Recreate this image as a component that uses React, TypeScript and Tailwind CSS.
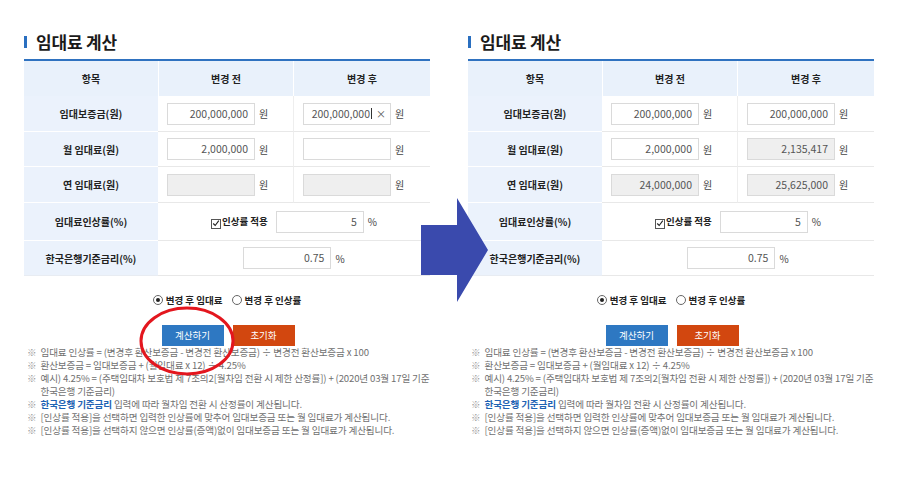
import React from "react"

const FONT = { fontFamily: '"Noto Sans CJK KR", "Noto Sans", sans-serif' }

interface Row {
  label: string
  before: { value: string; disabled?: boolean; cursor?: boolean }
  after: { value: string; disabled?: boolean; cursor?: boolean }
}

const LEFT_ROWS: Row[] = [
  { label: "임대보증금(원)", before: { value: "200,000,000" }, after: { value: "200,000,000", cursor: true } },
  { label: "월 임대료(원)", before: { value: "2,000,000" }, after: { value: "" } },
  { label: "연 임대료(원)", before: { value: "", disabled: true }, after: { value: "", disabled: true } },
]

const RIGHT_ROWS: Row[] = [
  { label: "임대보증금(원)", before: { value: "200,000,000" }, after: { value: "200,000,000" } },
  { label: "월 임대료(원)", before: { value: "2,000,000" }, after: { value: "2,135,417", disabled: true } },
  { label: "연 임대료(원)", before: { value: "24,000,000", disabled: true }, after: { value: "25,625,000", disabled: true } },
]

const NOTES = [
  "임대료 인상률 = (변경후 환산보증금 - 변경전 환산보증금) ÷ 변경전 환산보증금 x 100",
  "환산보증금 = 임대보증금 + (월임대료 x 12) ÷ 4.25%",
]

function Field({ value, disabled, cursor }: { value: string; disabled?: boolean; cursor?: boolean }) {
  return (
    <div
      className={
        "w-[88px] h-[22px] border border-[#dadada] flex items-center justify-end pr-[6px] text-[10.5px] text-[#555] " +
        (disabled ? "bg-[#efefef]" : "bg-white")
      }
    >
      {cursor ? (
        <>
          <span>{value}</span>
          <span className="w-px h-[11px] bg-[#333] ml-px" />
          <span className="ml-[4px] text-[10px] text-[#555] -mr-[2px]">×</span>
        </>
      ) : (
        value
      )}
    </div>
  )
}

function Panel({ rows }: { rows: Row[] }) {
  const labelCell = "bg-[#ebf2fc] border-b border-white flex items-center justify-center text-[10px] font-bold text-[#222]"
  const dataCell = "bg-white border-b border-[#e8e8e8] flex items-center pl-[9px] gap-[4px] text-[10px] text-[#444]"

  return (
    <div className="w-[406px] flex flex-col">
      {/* Title */}
      <div className="h-[22px] flex items-center gap-[9px]">
        <span className="w-[3px] h-[12px] bg-[#2a6fc0]" />
        <span className="text-[17px] font-bold text-[#1a1a1a] tracking-[-0.2px]">임대료 계산</span>
      </div>

      {/* Table */}
      <div className="mt-[6px] border-t-2 border-[#2f72c0] grid grid-cols-[134px_135px_137px]">
        <div className="h-[35px] bg-[#e9f1fb] flex items-center justify-center text-[10px] font-bold text-[#222]">항목</div>
        <div className="h-[35px] bg-[#e9f1fb] border-l border-white flex items-center justify-center text-[10px] font-bold text-[#222]">
          변경 전
        </div>
        <div className="h-[35px] bg-[#e9f1fb] border-l border-white flex items-center justify-center text-[10px] font-bold text-[#222]">
          변경 후
        </div>

        {rows.map((row, i) => (
          <React.Fragment key={i}>
            <div className={labelCell + (i === 1 ? " h-[35px]" : " h-[36px]")}>{row.label}</div>
            <div className={dataCell}>
              <Field {...row.before} />
              <span>원</span>
            </div>
            <div className={dataCell + " border-l border-l-[#eeeeee]"}>
              <Field {...row.after} />
              <span>원</span>
            </div>
          </React.Fragment>
        ))}

        {/* Rent increase rate */}
        <div className={labelCell + " h-[38px]"}>임대료인상률(%)</div>
        <div className="col-span-2 bg-white border-b border-[#e8e8e8] flex items-center justify-center gap-[4px] text-[10px] text-[#444]">
          <span className="flex items-end gap-[1px] mr-[4px]">
            <span className="w-[10px] h-[10px] border border-[#555] bg-white flex items-center justify-center mt-[3px]">
              <svg viewBox="0 0 10 10" className="w-[9px] h-[9px]">
                <path d="M1.5 5 L4 7.5 L8.5 1.5" fill="none" stroke="#222" strokeWidth="1.4" />
              </svg>
            </span>
            <span className="text-[9.5px] font-bold text-[#222]">인상률 적용</span>
          </span>
          <Field value="5" />
          <span>%</span>
        </div>

        {/* Bank of Korea base rate */}
        <div className={labelCell + " h-[35px] border-b-[#e8ecf2]"}>한국은행기준금리(%)</div>
        <div className="col-span-2 bg-white border-b border-[#e8e8e8] flex items-center justify-center gap-[4px] text-[10px] text-[#444]">
          <Field value="0.75" />
          <span>%</span>
        </div>
      </div>

      {/* Radio options */}
      <div className="mt-[16px] h-[16px] flex items-center justify-center gap-[3px] text-[9.5px] font-bold text-[#222]">
        <span className="w-[10px] h-[10px] rounded-full border border-[#666] flex items-center justify-center">
          <span className="w-[4px] h-[4px] rounded-full bg-[#222]" />
        </span>
        <span>변경 후 임대료</span>
        <span className="ml-[6px] w-[10px] h-[10px] rounded-full border border-[#666]" />
        <span>변경 후 인상률</span>
      </div>

      {/* Buttons */}
      <div className="mt-[17px] flex justify-center gap-[9px] pl-[2px]">
        <button className="w-[62px] h-[21px] bg-[#2e78c2] text-white text-[9.5px]">계산하기</button>
        <button className="w-[62px] h-[21px] bg-[#d2470f] text-white text-[9.5px]">초기화</button>
      </div>

      {/* Notes */}
      <ul className="pl-[3px] flex flex-col text-[9.6px] leading-[13px] text-[#707070] tracking-[-0.15px]">
        {NOTES.map((n, i) => (
          <li key={i} className="flex gap-[4px] whitespace-nowrap">
            <span className="text-[#999]">※</span>
            <span>{n}</span>
          </li>
        ))}
        <li className="flex gap-[4px] whitespace-nowrap">
          <span className="text-[#999]">※</span>
          <span>
            예시) 4.25% = (주택임대차 보호법 제 7조의2[월차임 전환 시 제한 산정률]) + (2020년 03월 17일 기준
            <br />
            한국은행 기준금리)
          </span>
        </li>
        <li className="flex gap-[4px] whitespace-nowrap">
          <span className="text-[#999]">※</span>
          <span>
            <b className="text-[#1e63b4]">한국은행 기준금리</b> 입력에 따라 월차임 전환 시 산정률이 계산됩니다.
          </span>
        </li>
        <li className="flex gap-[4px] whitespace-nowrap">
          <span className="text-[#999]">※</span>
          <span>[인상률 적용]을 선택하면 입력한 인상률에 맞추어 임대보증금 또는 월 임대료가 계산됩니다.</span>
        </li>
        <li className="flex gap-[4px] whitespace-nowrap">
          <span className="text-[#999]">※</span>
          <span>[인상률 적용]을 선택하지 않으면 인상률(증액)없이 임대보증금 또는 월 임대료가 계산됩니다.</span>
        </li>
      </ul>
    </div>
  )
}

export default function App() {
  return (
    <div className="relative w-[900px] h-[482px] bg-white overflow-hidden" style={FONT}>
      <div className="flex gap-[38px] pl-[24px] pt-[31px]">
        <Panel rows={LEFT_ROWS} />
        <Panel rows={RIGHT_ROWS} />
      </div>

      {/* Highlight around the calculate button */}
      <svg className="absolute left-[138px] top-[305px]" width="98" height="72" viewBox="0 0 98 72">
        <ellipse cx="49" cy="36" rx="46" ry="33" fill="none" stroke="#e3161e" strokeWidth="3" />
      </svg>

      {/* Arrow between before / after */}
      <svg className="absolute left-[421px] top-[198px]" width="67" height="104" viewBox="0 0 67 104">
        <polygon points="0,27 36,27 36,0 67,52 36,104 36,77 0,77" fill="#3a4aad" />
      </svg>
    </div>
  )
}
